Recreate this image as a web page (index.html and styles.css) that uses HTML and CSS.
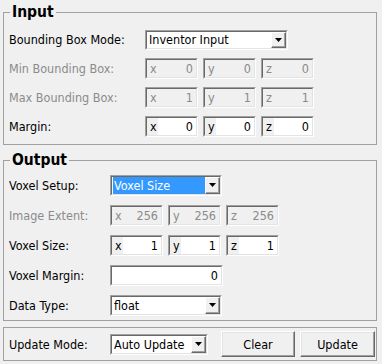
FILE: index.html
```html
<!DOCTYPE html>
<html lang="en">
<head>
  <meta charset="UTF-8">
  <title>Voxelize</title>
  <link rel="stylesheet" href="styles.css">
</head>
<body>
  <fieldset class="group inp">
    <legend>Input</legend>
    <div class="row">
      <span class="lbl">Bounding Box Mode:</span>
      <div class="combo c-mode"><div class="cin"><span class="ctext">Inventor Input</span><span class="arrow"><svg width="7" height="4" viewBox="0 0 7 4"><path d="M0 0h7L3.5 4z"/></svg></span></div></div>
    </div>
    <div class="row off">
      <span class="lbl">Min Bounding Box:</span>
      <div class="vec">
        <div class="field"><div class="fin"><span class="ax">x</span><span class="val">0</span></div></div>
        <div class="field"><div class="fin"><span class="ax">y</span><span class="val">0</span></div></div>
        <div class="field"><div class="fin"><span class="ax">z</span><span class="val">0</span></div></div>
      </div>
    </div>
    <div class="row off">
      <span class="lbl">Max Bounding Box:</span>
      <div class="vec">
        <div class="field"><div class="fin"><span class="ax">x</span><span class="val">1</span></div></div>
        <div class="field"><div class="fin"><span class="ax">y</span><span class="val">1</span></div></div>
        <div class="field"><div class="fin"><span class="ax">z</span><span class="val">1</span></div></div>
      </div>
    </div>
    <div class="row">
      <span class="lbl">Margin:</span>
      <div class="vec">
        <div class="field"><div class="fin"><span class="ax">x</span><span class="val">0</span></div></div>
        <div class="field"><div class="fin"><span class="ax">y</span><span class="val">0</span></div></div>
        <div class="field"><div class="fin"><span class="ax">z</span><span class="val">0</span></div></div>
      </div>
    </div>
  </fieldset>

  <fieldset class="group out">
    <legend>Output</legend>
    <div class="row">
      <span class="lbl">Voxel Setup:</span>
      <div class="combo c-wide"><div class="cin"><span class="ctext sel">Voxel Size</span><span class="arrow"><svg width="7" height="4" viewBox="0 0 7 4"><path d="M0 0h7L3.5 4z"/></svg></span></div></div>
    </div>
    <div class="row off">
      <span class="lbl">Image Extent:</span>
      <div class="vec">
        <div class="field"><div class="fin"><span class="ax">x</span><span class="val">256</span></div></div>
        <div class="field"><div class="fin"><span class="ax">y</span><span class="val">256</span></div></div>
        <div class="field"><div class="fin"><span class="ax">z</span><span class="val">256</span></div></div>
      </div>
    </div>
    <div class="row">
      <span class="lbl">Voxel Size:</span>
      <div class="vec">
        <div class="field"><div class="fin"><span class="ax">x</span><span class="val">1</span></div></div>
        <div class="field"><div class="fin"><span class="ax">y</span><span class="val">1</span></div></div>
        <div class="field"><div class="fin"><span class="ax">z</span><span class="val">1</span></div></div>
      </div>
    </div>
    <div class="row">
      <span class="lbl">Voxel Margin:</span>
      <div class="field f-wide"><div class="fin"><span class="val">0</span></div></div>
    </div>
    <div class="row">
      <span class="lbl">Data Type:</span>
      <div class="combo c-wide"><div class="cin"><span class="ctext">float</span><span class="arrow"><svg width="7" height="4" viewBox="0 0 7 4"><path d="M0 0h7L3.5 4z"/></svg></span></div></div>
    </div>
  </fieldset>

  <div class="bar">
    <span class="lbl">Update Mode:</span>
    <div class="combo c-short"><div class="cin"><span class="ctext">Auto Update</span><span class="arrow"><svg width="7" height="4" viewBox="0 0 7 4"><path d="M0 0h7L3.5 4z"/></svg></span></div></div>
    <button class="btn b-clear">Clear</button>
    <button class="btn b-update">Update</button>
  </div>
</body>
</html>
```

FILE: styles.css
```css
body {
  margin: 0;
  padding: 0 5px 0 3px;
  background: #f0f0f0;
  font-family: "DejaVu Sans Condensed", "DejaVu Sans", sans-serif;
  font-size: 12.5px;
  color: #000;
}

.group {
  margin: 4px 0 0;
  padding: 5px 1px 3px 5px;
  border: 1px solid #a0a0a0;
  min-inline-size: 0;
}
.group legend {
  margin-left: 1px;
  padding: 0 2px;
  font-weight: bold;
  font-size: 15.5px;
  line-height: 16px;
}
.out {
  margin-top: 7px;
  padding: 2px 1px 0 5px;
}

.row {
  display: flex;
  align-items: center;
  height: 29px;
}
.out .row {
  height: 30px;
}
.lbl {
  flex: none;
  width: 136px;
}
.out .lbl,
.bar .lbl {
  width: 101px;
}
.off {
  color: #8b8b8b;
}

.vec {
  display: flex;
  gap: 5px;
}

/* sunken edit boxes */
.field,
.combo {
  box-sizing: border-box;
  border: 1px solid;
  border-color: #a0a0a0 #fff #fff #a0a0a0;
  flex: none;
}
.field {
  width: 53px;
  height: 21px;
}
.f-wide {
  width: 113px;
}
.fin,
.cin {
  box-sizing: border-box;
  height: 100%;
  border: 1px solid;
  border-color: #696969 #e3e3e3 #e3e3e3 #696969;
  display: flex;
  align-items: stretch;
}
.ax {
  width: 8px;
  padding-left: 3px;
  display: flex;
  align-items: center;
}
.val {
  flex: 1;
  background: #fff;
  display: flex;
  align-items: center;
  justify-content: flex-end;
  padding-right: 3px;
}
.off .val {
  background: transparent;
}

/* combo boxes */
.combo {
  height: 20px;
}
.c-mode {
  width: 143px;
}
.c-wide {
  width: 112px;
  height: 21px;
}
.c-short {
  width: 98px;
  height: 21px;
}
.cin {
  background: #fff;
}
.ctext {
  flex: 1;
  display: flex;
  align-items: center;
  padding-left: 2px;
}
.ctext.sel {
  background: #3399ff;
  color: #fff;
  padding-left: 1px;
  margin-left: 1px;
}
.arrow {
  flex: none;
  width: 15px;
  box-sizing: border-box;
  background: #f0f0f0;
  border: 1px solid;
  border-color: #fff #696969 #696969 #fff;
  box-shadow: inset -1px -1px 0 #a0a0a0;
  display: flex;
  align-items: center;
  justify-content: center;
}
.arrow svg {
  display: block;
}

/* bottom bar */
.bar {
  margin-top: 6px;
  padding: 3px 1px 3px 5px;
  border: 1px solid #a0a0a0;
  display: flex;
  align-items: center;
}
.btn {
  height: 26px;
  box-sizing: border-box;
  margin: 0;
  padding: 0;
  font: inherit;
  color: #000;
  background: #f0f0f0;
  border: 1px solid;
  border-color: #fff #696969 #696969 #fff;
  box-shadow: inset -1px -1px 0 #a0a0a0, inset 1px 1px 0 #e3e3e3;
}
.b-clear {
  width: 74px;
  margin-left: 13px;
}
.b-update {
  width: 75px;
  margin-left: 5px;
}
```
